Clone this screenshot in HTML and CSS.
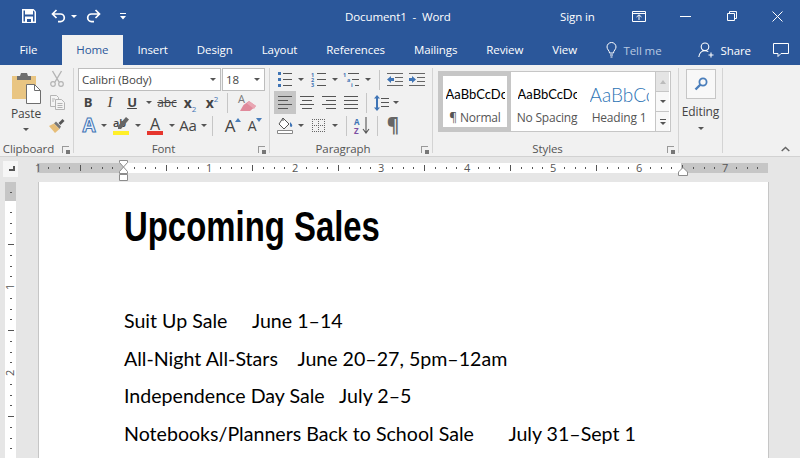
FILE: index.html
```html
<!DOCTYPE html>
<html lang="en">
<head>
  <meta charset="UTF-8">
  <title>Document1 - Word</title>
  <link rel="stylesheet" href="styles.css">
</head>
<body>
  <div class="titlebar">
    <div class="qat">
      <svg class="qat-save" width="14" height="14" viewBox="0 0 14 14"><path d="M0 0h11.5L14 2.5V14H0z" fill="#fff"/><path d="M1.5 1.5h1.5v4h8v-4h.2l1.3 1.3v9.7h-1.500v-5h-8v5h-1.500z" fill="#2b579a"/><path d="M5 10h4v3H5z" fill="#2b579a"/></svg>
      <svg class="qat-undo" width="15" height="14" viewBox="0 0 15 14"><path d="M5.500 1L1.500 5l4 4M1.500 5H9.500a3.800 3.800 0 0 1 0 7.600H7" fill="none" stroke="#fff" stroke-width="1.700"/></svg>
      <span class="tri tri-white qat-arrow"></span>
      <svg class="qat-redo" width="15" height="14" viewBox="0 0 15 14"><path d="M9.500 1l4 4-4 4M13.500 5H5.500a3.800 3.800 0 0 0 0 7.600H8" fill="none" stroke="#fff" stroke-width="1.700"/></svg>
      <svg class="qat-more" width="6" height="7" viewBox="0 0 6 7"><path d="M0 0h6v1H0zM0 3h6L3 6.500z" fill="#fff"/></svg>
    </div>
    <div class="doc-title">Document1 &nbsp;-&nbsp; Word</div>
    <div class="signin">Sign in</div>
    <svg class="win-display" width="14" height="11" viewBox="0 0 14 11"><path d="M.5.500h13v10H.5zM.5 2.500h13M7 9V4M4.500 6L7 3.800 9.500 6" fill="none" stroke="#fff"/></svg>
    <svg class="win-min" width="11" height="1" viewBox="0 0 11 1"><path d="M0 0h11v1H0z" fill="#fff"/></svg>
    <svg class="win-restore" width="10" height="10" viewBox="0 0 10 10"><path d="M.5 2.500h7v7h-7zM2.500 2.500v-2h7v7h-2" fill="none" stroke="#fff"/></svg>
    <svg class="win-close" width="11" height="11" viewBox="0 0 11 11"><path d="M.5.500l10 10M10.500.500l-10 10" fill="none" stroke="#fff"/></svg>
  </div>

  <div class="tabs">
    <div class="tab tab-file">File</div>
    <div class="tab tab-active">Home</div>
    <div class="tab">Insert</div>
    <div class="tab">Design</div>
    <div class="tab">Layout</div>
    <div class="tab">References</div>
    <div class="tab">Mailings</div>
    <div class="tab">Review</div>
    <div class="tab">View</div>
    <div class="tellme">
      <svg width="11" height="16" viewBox="0 0 11 16"><path d="M3.500 11C3.500 8.500 1 7.500 1 5a4.500 4.500 0 0 1 9 0c0 2.500-2.500 3.500-2.500 6zM4 13h3M4.500 15h2" fill="none" stroke="#fff"/></svg>
      <span>Tell me</span>
    </div>
    <div class="share">
      <svg width="17" height="16" viewBox="0 0 17 16"><path d="M7 1a3.800 3.800 0 1 1 0 7.600A3.800 3.800 0 0 1 7 1zM.8 15c.4-3.800 3-6.400 6.200-6.400 1.300 0 2.400.4 3.300 1M13 10.500v5M10.500 13h5" fill="none" stroke="#fff" stroke-width="1.100"/></svg>
      <span>Share</span>
    </div>
    <svg class="comment" width="16" height="15" viewBox="0 0 16 15"><path d="M.5.500h15v10H8l-3 3v-3H.5z" fill="none" stroke="#fff"/></svg>
  </div>

  <div class="ribbon">
    <div class="group group-clipboard">
      <div class="group-body clipboard">
        <div class="paste">
          <svg width="29" height="31" viewBox="0 0 29 31"><path d="M0 3h24v23H0z" fill="#e9c582"/><path d="M5 3h3l1-3h6l1 3h3v4H5z" fill="#6e6e6e"/><path d="M14.500 11.500h8l6 6v13h-14z" fill="#fff" stroke="#6e6e6e"/><path d="M22.500 11.500v6h6" fill="none" stroke="#6e6e6e"/></svg>
          <span class="paste-label">Paste</span>
          <span class="tri"></span>
        </div>
        <div class="clip-tools">
          <svg width="14" height="16" viewBox="0 0 14 16"><path d="M2.500 0l6.500 11M11.500 0L5 11" fill="none" stroke="#b4b4b4" stroke-width="1.400"/><circle cx="3" cy="13" r="2.300" fill="none" stroke="#b4b4b4" stroke-width="1.200"/><circle cx="11" cy="13" r="2.300" fill="none" stroke="#b4b4b4" stroke-width="1.200"/></svg>
          <svg width="15" height="15" viewBox="0 0 15 15"><path d="M.5.500h6l2 2v9H.5z" fill="#f4f4f4" stroke="#b4b4b4"/><path d="M5.500 4.500h6l3 3v7h-9z" fill="#f4f4f4" stroke="#b4b4b4"/><path d="M7.500 8.500h5M7.500 10.500h5M7.500 12.500h5M2 4h3M2 6h2" stroke="#b4b4b4"/></svg>
          <svg width="16" height="15" viewBox="0 0 16 15"><path d="M9.500 5L13.500 1l2 2-4 4z" fill="#555"/><path d="M7 3.500l5 5-1.500 2.500L5 5.500z" fill="#777"/><path d="M5 5.500L0 8l6 7 4.500-4z" fill="#e6bd78"/></svg>
        </div>
      </div>
      <div class="group-label"><span>Clipboard</span><i class="launcher"></i></div>
    </div>
    <div class="vline"></div>

    <div class="group group-font">
      <div class="group-body font-body">
        <div class="font-boxes">
          <div class="combo combo-name"><span>Calibri (Body)</span><span class="tri"></span></div>
          <div class="combo combo-size"><span>18</span><span class="tri"></span></div>
        </div>
        <div class="cells font-row-2">
          <span class="glyph glyph-b">B</span>
          <span class="glyph glyph-i">I</span>
          <span class="glyph glyph-u">U</span>
          <span class="tri"></span>
          <span class="glyph glyph-abc">abc</span>
          <span class="glyph glyph-x">x<sub>2</sub></span>
          <span class="glyph glyph-x">x<sup>2</sup></span>
          <span class="sep"></span>
          <svg width="19" height="17" viewBox="0 0 19 17"><path d="M2 17L5.500 11 11 7l7 5-6 5z" fill="#e08a9b"/><path d="M11 7l7 5 -2 3-7-5.500z" fill="#e9a6b3"/><text x="0" y="9" class="eraser-a">A</text></svg>
        </div>
        <div class="cells font-row-3">
          <span class="glyph glyph-effect">A</span>
          <span class="tri"></span>
          <span class="marked"><span class="marked-ab">ab</span><svg class="marked-pen" width="11" height="13" viewBox="0 0 11 13"><path d="M8 0l3 2.500L3 12H0v-3z" fill="#666"/></svg><i class="bar bar-yellow"></i></span>
          <span class="tri"></span>
          <span class="marked marked-a"><span>A</span><i class="bar bar-red"></i></span>
          <span class="tri"></span>
          <span class="glyph glyph-aa">Aa</span>
          <span class="tri"></span>
          <span class="sep"></span>
          <span class="glyph glyph-grow">A<svg width="6" height="4" viewBox="0 0 6 4"><path d="M0 4l3-4 3 4z" fill="#4a7ebb"/></svg></span>
          <span class="glyph glyph-shrink">A<svg width="6" height="4" viewBox="0 0 6 4"><path d="M0 0h6L3 4z" fill="#4a7ebb"/></svg></span>
        </div>
      </div>
      <div class="group-label"><span>Font</span><i class="launcher"></i></div>
    </div>
    <div class="vline"></div>

    <div class="group group-para">
      <div class="group-body para-body">
        <div class="cells para-row-1">
          <svg width="14" height="15" viewBox="0 0 14 15"><path d="M0 0h3v3H0zM0 6h3v3H0zM0 12h3v3H0z" fill="#3f74b5"/><path d="M5 1.500h9M5 7.500h9M5 13.500h9" stroke="#555"/></svg>
          <span class="tri"></span>
          <svg width="15" height="15" viewBox="0 0 15 15"><text x="0" y="4.500" class="num">1</text><text x="0" y="10" class="num">2</text><text x="0" y="15" class="num">3</text><path d="M6 1.500h9M6 7.500h9M6 13.500h9" stroke="#555"/></svg>
          <span class="tri"></span>
          <svg width="17" height="15" viewBox="0 0 17 15"><text x="0" y="4.500" class="num">1</text><text x="4" y="10" class="num">a</text><text x="8" y="15" class="num">i</text><path d="M5 1.500h11M9 7.500h7M12 13.500h4" stroke="#555"/></svg>
          <span class="tri"></span>
          <span class="sep"></span>
          <svg width="16" height="14" viewBox="0 0 16 14"><path d="M0 .5h16M8 4.500h8M8 8.500h8M0 12.500h16" stroke="#666"/><path d="M0 6.500l4-3.500v2h3v3H4v2z" fill="#3f74b5"/></svg>
          <svg width="16" height="14" viewBox="0 0 16 14"><path d="M0 .5h16M8 4.500h8M8 8.500h8M0 12.500h16" stroke="#666"/><path d="M7 6.500L3 3v2H0v3h3v2z" fill="#3f74b5"/></svg>
        </div>
        <div class="cells para-row-2">
          <span class="align align-on"><svg width="14" height="13" viewBox="0 0 14 13"><path d="M0 .5h14M0 4.500h10M0 8.500h14M0 12.500h10" stroke="#555"/></svg></span>
          <span class="align"><svg width="14" height="13" viewBox="0 0 14 13"><path d="M0 .5h14M2 4.500h10M0 8.500h14M2 12.500h10" stroke="#555"/></svg></span>
          <span class="align"><svg width="14" height="13" viewBox="0 0 14 13"><path d="M0 .5h14M4 4.500h10M0 8.500h14M4 12.500h10" stroke="#555"/></svg></span>
          <span class="align"><svg width="14" height="13" viewBox="0 0 14 13"><path d="M0 .5h14M0 4.500h14M0 8.500h14M0 12.500h14" stroke="#555"/></svg></span>
          <span class="sep"></span>
          <svg width="15" height="16" viewBox="0 0 15 16"><path d="M3 0l3 3.500H4v9h2L3 16 0 12.500h2v-9H0z" fill="#3f74b5"/><path d="M7 3.500h8M7 7.500h8M7 11.500h8" stroke="#555"/></svg>
          <span class="tri"></span>
        </div>
        <div class="cells para-row-3">
          <svg width="17" height="17" viewBox="0 0 17 17"><path d="M6 1l6 6-5 5-5-5z" fill="#fff" stroke="#555"/><path d="M6 1v3" stroke="#555"/><path d="M13 5c1.500 1.500 3 3 2 4.500-1 1-2.500 0-2-1.500z" fill="#3f74b5"/><path d="M.5 13.500h15v3H.5z" fill="#fff" stroke="#888"/></svg>
          <span class="tri"></span>
          <svg class="grid-icon" width="13" height="13" viewBox="0 0 13 13"><path d="M.5 0v13M6.500 0v13M12.500 0v13M0 .5h13M0 6.500h13M0 12.500h13" stroke="#666" stroke-dasharray="1 1"/></svg>
          <span class="tri"></span>
          <span class="sep"></span>
          <svg width="16" height="17" viewBox="0 0 16 17"><text x="0" y="7.500" class="sort-a">A</text><text x="0" y="16.500" class="sort-z">Z</text><path d="M12 0v15M9 12l3 4 3-4" fill="none" stroke="#555" stroke-width="1.100"/></svg>
          <span class="sep"></span>
          <span class="glyph glyph-pilcrow">¶</span>
        </div>
      </div>
      <div class="group-label"><span>Paragraph</span><i class="launcher"></i></div>
    </div>
    <div class="vline"></div>

    <div class="group group-styles">
      <div class="group-body styles-body">
        <div class="gallery">
          <div class="style-card style-on"><span class="sample">AaBbCcDc</span><span class="style-name">¶ Normal</span></div>
          <div class="style-card"><span class="sample">AaBbCcDc</span><span class="style-name">No Spacing</span></div>
          <div class="style-card"><span class="sample sample-h1">AaBbCc</span><span class="style-name">Heading 1</span></div>
          <div class="gallery-scroll">
            <span class="scroll-btn scroll-off"><i class="tri tri-up"></i></span>
            <span class="scroll-btn"><i class="tri"></i></span>
            <span class="scroll-btn scroll-more"><i class="more-line"></i><i class="tri"></i></span>
          </div>
        </div>
      </div>
      <div class="group-label"><span>Styles</span><i class="launcher"></i></div>
    </div>
    <div class="vline"></div>

    <div class="group group-editing">
      <div class="find-btn">
        <svg width="14" height="14" viewBox="0 0 14 14"><circle cx="9" cy="5" r="3.600" fill="none" stroke="#4a7ebb" stroke-width="1.800"/><path d="M6.500 7.500L1.500 12.500" stroke="#4a7ebb" stroke-width="2.400"/></svg>
      </div>
      <span class="editing-label">Editing</span>
      <span class="tri"></span>
    </div>
    <div class="vline"></div>

    <svg class="collapse" width="9" height="6" viewBox="0 0 9 6"><path d="M.7 5L4.500 1.500 8.300 5" fill="none" stroke="#666" stroke-width="1.500"/></svg>
  </div>

  <div class="ruler-row">
    <div class="corner"><i class="corner-tab"></i></div>
    <svg class="hruler" width="731" height="25" viewBox="0 0 731 25">
      <defs>
        <pattern id="hticks" x="0" y="6" width="86" height="10" patternUnits="userSpaceOnUse">
          <g fill="#555" shape-rendering="crispEdges">
            <rect x="10.750" y="4" width="1" height="2"/><rect x="21.500" y="4" width="1" height="2"/><rect x="32.250" y="4" width="1" height="2"/>
            <rect x="43" y="2" width="1" height="6"/>
            <rect x="53.750" y="4" width="1" height="2"/><rect x="64.500" y="4" width="1" height="2"/><rect x="75.250" y="4" width="1" height="2"/>
          </g>
        </pattern>
      </defs>
      <rect x="0" y="6" width="731" height="10" fill="#c6c6c6"/>
      <rect x="86" y="6" width="558" height="10" fill="#fff"/>
      <rect x="0" y="6" width="731" height="10" fill="url(#hticks)"/>
      <g class="rnum">
        <text x="1" y="14.500">1</text><text x="172" y="14.500">1</text><text x="258" y="14.500">2</text><text x="344" y="14.500">3</text>
        <text x="430" y="14.500">4</text><text x="516" y="14.500">5</text><text x="602" y="14.500">6</text><text x="688" y="14.500">7</text>
      </g>
      <path d="M82.500 3.500h8v2L86.500 10 82.500 5.500zM86.500 10l4 4.500v2h-8v-2zM82.500 17.500h8v6h-8z" fill="#fff" stroke="#8c8c8c"/>
      <path d="M641.500 15l4.500-4.500 4.500 4.500v3.500h-9z" fill="#fff" stroke="#8c8c8c"/>
    </svg>
  </div>

  <div class="workspace">
    <svg class="vruler" width="11" height="276" viewBox="0 0 11 276">
      <defs>
        <pattern id="vticks" x="0" y="19" width="11" height="86" patternUnits="userSpaceOnUse">
          <g fill="#555" shape-rendering="crispEdges">
            <rect x="5" y="10.750" width="2" height="1"/><rect x="5" y="21.500" width="2" height="1"/><rect x="5" y="32.250" width="2" height="1"/>
            <rect x="3" y="43" width="6" height="1"/>
            <rect x="5" y="53.750" width="2" height="1"/><rect x="5" y="64.500" width="2" height="1"/><rect x="5" y="75.250" width="2" height="1"/>
          </g>
        </pattern>
      </defs>
      <rect width="11" height="276" fill="#fff"/>
      <rect width="11" height="19" fill="#c6c6c6"/>
      <rect x="5" y="10" width="2" height="1" fill="#555"/>
      <rect y="19" width="11" height="257" fill="url(#vticks)"/>
      <g class="rnum">
        <text transform="translate(9 105) rotate(-90)">1</text>
        <text transform="translate(9 191) rotate(-90)">2</text>
      </g>
    </svg>
    <div class="page">
      <h1 class="doc-heading">Upcoming Sales</h1>
      <p class="doc-line">Suit Up Sale     June 1–14</p>
      <p class="doc-line">All-Night All-Stars    June 20–27, 5pm–12am</p>
      <p class="doc-line">Independence Day Sale   July 2–5</p>
      <p class="doc-line">Notebooks/Planners Back to School Sale       July 31–Sept 1</p>
    </div>
  </div>
</body>
</html>
```
FILE: styles.css
```css
html, body {
  margin: 0;
  height: 100%;
  overflow: hidden;
}

body {
  background: #e6e6e6;
  color: #444;
  font-family: "Open Sans", "Noto Sans", sans-serif;
  font-size: 11.500px;
  letter-spacing: -0.100px;
}

svg {
  display: block;
  flex: none;
  overflow: visible;
}

/* title bar */
.titlebar {
  display: flex;
  align-items: center;
  height: 32px;
  padding-bottom: 3px;
  background: #2b579a;
  color: #fff;
}

.qat {
  display: flex;
  align-items: center;
  padding-left: 22px;
  width: 323px;
  box-sizing: border-box;
}

.qat-undo { margin-left: 15px; }
.qat-arrow { margin-left: 5px; }
.qat-redo { margin-left: 9px; }
.qat-more { margin-left: 19px; }

.doc-title {
  width: 215px;
  white-space: nowrap;
  padding-left: 22px;
}

.signin { width: 36px; white-space: nowrap; }
.win-display { margin-left: 36px; }
.win-min { margin-left: 34px; }
.win-restore { margin-left: 36px; }
.win-close { margin-left: 35px; }

/* tabs */
.tabs {
  display: flex;
  align-items: center;
  height: 30px;
  padding-left: 5px;
  background: #2b579a;
  color: #fff;
}

.tab {
  height: 30px;
  line-height: 30px;
  padding: 0 14.500px;
  white-space: nowrap;
}

.tab-file { margin-right: 10px; }

.tab-active {
  background: #f1f1f1;
  color: #2b579a;
}

.tellme {
  display: flex;
  align-items: center;
  gap: 7px;
  margin-left: 14px;
  color: #b9c9e2;
  white-space: nowrap;
}

.share {
  display: flex;
  align-items: center;
  gap: 6px;
  margin-left: 36px;
}

.comment { margin-left: 22px; }

/* ribbon */
.ribbon {
  display: flex;
  height: 88px;
  padding-top: 3px;
  background: #f1f1f1;
  border-bottom: 1px solid #d2d2d2;
}

.vline {
  width: 1px;
  height: 85px;
  background: #d4d4d4;
  flex: none;
}

.group {
  display: flex;
  flex-direction: column;
  flex: none;
  box-sizing: border-box;
}

.group-body { height: 73px; }

.group-clipboard { width: 73px; }
.group-font { width: 195px; }
.group-para { width: 162px; }
.group-styles { width: 245px; }
.group-editing { width: 43px; align-items: center; }

.font-body { padding-left: 4px; }
.para-body { padding-left: 2px; }
.styles-body { padding-left: 5px; }

.group-label {
  display: grid;
  grid-template-columns: 1fr 12px;
  align-items: center;
  height: 16px;
  line-height: 18px;
  padding-right: 4px;
  text-align: center;
  color: #555;
}

.launcher {
  justify-self: end;
  width: 7px;
  height: 7px;
  box-sizing: border-box;
  border-left: 1px solid #999;
  border-top: 1px solid #999;
  position: relative;
}

.launcher::after {
  content: "";
  position: absolute;
  right: -1px;
  bottom: -1px;
  width: 4px;
  height: 4px;
  background: #777;
}

.tri {
  display: inline-block;
  width: 0;
  height: 0;
  flex: none;
  justify-self: center;
  border-left: 3px solid transparent;
  border-right: 3px solid transparent;
  border-top: 3px solid #555;
}

.tri-white { border-top-color: #fff; }

.tri-up {
  border-top: 0;
  border-bottom: 4px solid #bbb;
}

.sep {
  justify-self: center;
  width: 1px;
  height: 20px;
  background: #c6c6c6;
}

/* clipboard */
.clipboard {
  display: flex;
  padding-top: 3px;
}

.paste {
  display: flex;
  flex-direction: column;
  align-items: center;
  width: 47px;
  padding-top: 2px;
  padding-left: 5px;
  box-sizing: border-box;
}

.paste-label {
  margin-top: 0;
  line-height: 20px;
  font-size: 12px;
}

.paste .tri { margin-top: 4px; }

.clip-tools {
  display: flex;
  flex-direction: column;
  align-items: center;
  gap: 8px;
  width: 20px;
}

/* font */
.font-boxes {
  display: flex;
  gap: 1px;
  height: 23px;
}

.combo {
  display: flex;
  align-items: center;
  justify-content: space-between;
  height: 23px;
  box-sizing: border-box;
  padding: 0 4px 0 3px;
  background: #fff;
  border: 1px solid #bdbdbd;
  white-space: nowrap;
}

.combo-name { width: 143px; }
.combo-size { width: 43px; }

.cells {
  display: grid;
  height: 23px;
  align-items: center;
  justify-items: center;
}

.font-row-2 {
  margin-left: -1px;
  grid-template-columns: 22px 22px 22px 12px 24px 22px 22px 8px 32px;
}

.font-row-3 {
  margin-left: -1px;
  grid-template-columns: 24px 6px 28px 6px 28px 6px 26px 6px 10px 32px 12px;
}

.glyph {
  font-size: 13px;
  line-height: 23px;
  white-space: nowrap;
}

.glyph-b { font-weight: 700; }
.glyph-i { font-style: italic; font-family: "Liberation Serif", serif; font-size: 15px; }
.glyph-u { font-weight: 700; text-decoration: underline; }
.glyph-abc { text-decoration: line-through; font-size: 12px; }
.glyph-x { font-weight: 700; font-size: 14px; }

.glyph-x sub,
.glyph-x sup {
  font-size: 8px;
  font-weight: 400;
  color: #3f74b5;
  line-height: 0;
}

.glyph-effect {
  font-size: 19px;
  font-weight: 700;
  color: #eaf2fb;
  -webkit-text-stroke: 1px #3f74b5;
}

.glyph-aa { font-size: 15px; }
.glyph-grow { font-size: 17px; display: flex; align-items: flex-start; line-height: 21px; }
.glyph-shrink { font-size: 14px; display: flex; align-items: flex-start; line-height: 21px; }
.glyph-grow svg,
.glyph-shrink svg { margin-top: 3px; }
.glyph-pilcrow { font-size: 19px; font-weight: 700; color: #666; }

.eraser-a {
  font: 11px "Open Sans", sans-serif;
  fill: #777;
}

.marked {
  display: flex;
  flex-direction: column;
  align-items: flex-start;
  width: 16px;
  height: 18px;
  position: relative;
}

.marked-ab {
  font-size: 11px;
  line-height: 11px;
  font-weight: 600;
}

.marked-pen {
  position: absolute;
  right: 0;
  top: 0;
}

.marked-a {
  align-items: center;
  font-size: 16px;
  line-height: 14px;
}

.bar {
  position: absolute;
  left: 0;
  bottom: 0;
  width: 16px;
  height: 4px;
}

.bar-yellow { background: #ffef29; }
.bar-red { background: #e6362e; }

/* paragraph */
.para-row-1 { grid-template-columns: 25px 7px 28px 6px 27px 6px 16px 16px 28px; }
.para-row-2 { grid-template-columns: 22px 22px 22px 22px 8px 23px 6px; padding-left: 2px; }
.para-row-3 { grid-template-columns: 26px 6px 28px 6px 16px 16px 14px 18px; }

.align {
  display: flex;
  align-items: center;
  justify-content: center;
  width: 22px;
  height: 23px;
}

.align-on { background: #c6c6c6; }

.num {
  font: 700 5.500px "Open Sans", sans-serif;
  fill: #3f74b5;
}

.sort-a {
  font: 700 8px "Open Sans", sans-serif;
  fill: #3f74b5;
}

.sort-z {
  font: 700 8px "Open Sans", sans-serif;
  fill: #7b4fa3;
}

/* styles */
.gallery {
  display: flex;
  width: 233px;
  height: 61px;
  margin-top: 3px;
  box-sizing: border-box;
  background: #fff;
  border: 1px solid #c6c6c6;
}

.style-card {
  display: flex;
  flex-direction: column;
  align-items: center;
  flex: none;
  width: 72px;
  height: 59px;
  box-sizing: border-box;
  padding: 11px 4px 0;
  overflow: hidden;
}

.style-on {
  padding: 7px 0 0;
  border: 4px solid #c6c6c6;
}

.sample {
  flex: none;
  width: 59px;
  height: 27px;
  overflow: hidden;
  white-space: nowrap;
  font-family: "Lato", sans-serif;
  font-size: 13px;
  line-height: 23px;
  letter-spacing: 0;
  color: #000;
}

.sample-h1 {
  font-size: 19px;
  color: #2e74b5;
  font-weight: 300;
}

.style-name {
  line-height: 16px;
  white-space: nowrap;
  font-size: 12px;
  letter-spacing: -0.200px;
  color: #555;
}

.gallery-scroll {
  display: flex;
  flex-direction: column;
  flex: none;
  width: 13px;
  border-left: 1px solid #c6c6c6;
}

.scroll-btn {
  display: flex;
  flex-direction: column;
  align-items: center;
  justify-content: center;
  gap: 2px;
  flex: 1;
  background: #f8f8f8;
  border-bottom: 1px solid #c6c6c6;
}

.scroll-btn:last-child { border-bottom: 0; }
.scroll-off { background: #e4e4e4; }

.more-line {
  width: 6px;
  height: 1px;
  background: #555;
}

/* editing */
.find-btn {
  display: flex;
  align-items: center;
  justify-content: center;
  width: 30px;
  height: 30px;
  margin-top: 1px;
  box-sizing: border-box;
  background: #f8f8f8;
  border: 1px solid #c6c6c6;
}

.editing-label {
  margin-top: 3px;
  line-height: 20px;
  font-size: 12px;
}

.group-editing .tri { margin-top: 5px; }

.collapse {
  margin-left: 58px;
  margin-top: 78px;
}

/* rulers */
.ruler-row {
  display: flex;
  height: 25px;
  background: #e6e6e6;
}

.corner {
  display: flex;
  align-items: flex-end;
  justify-content: flex-end;
  width: 15px;
  height: 16px;
  margin: 4px 0 0 3px;
  padding: 0 3px 6px 0;
  box-sizing: border-box;
  background: #f6f6f6;
}

.corner-tab {
  width: 6px;
  height: 5px;
  box-sizing: border-box;
  border-right: 2px solid #555;
  border-bottom: 2px solid #555;
}

.hruler { margin-left: 19px; }

.rnum text {
  font: 11px "Open Sans", sans-serif;
  fill: #555;
  text-anchor: middle;
}

.vruler { margin-left: 5px; }

/* document */
.workspace {
  display: flex;
  height: 276px;
}

.page {
  width: 731px;
  margin-left: 22px;
  box-sizing: border-box;
  padding-left: 85px;
  background: #fff;
  border-left: 1px solid #c6c6c6;
  border-right: 1px solid #c6c6c6;
  color: #000;
  overflow: hidden;
  letter-spacing: 0;
}

.doc-heading {
  margin: 19px 0 51px;
  font-family: "Liberation Sans", sans-serif;
  font-size: 43px;
  line-height: 50px;
  font-weight: 700;
  white-space: nowrap;
  transform: scaleX(0.765);
  transform-origin: left center;
}

.doc-line {
  margin: 0;
  height: 37.700px;
  line-height: 37.700px;
  font-family: "Lato", sans-serif;
  font-size: 19.600px;
  white-space: pre;
}
```
